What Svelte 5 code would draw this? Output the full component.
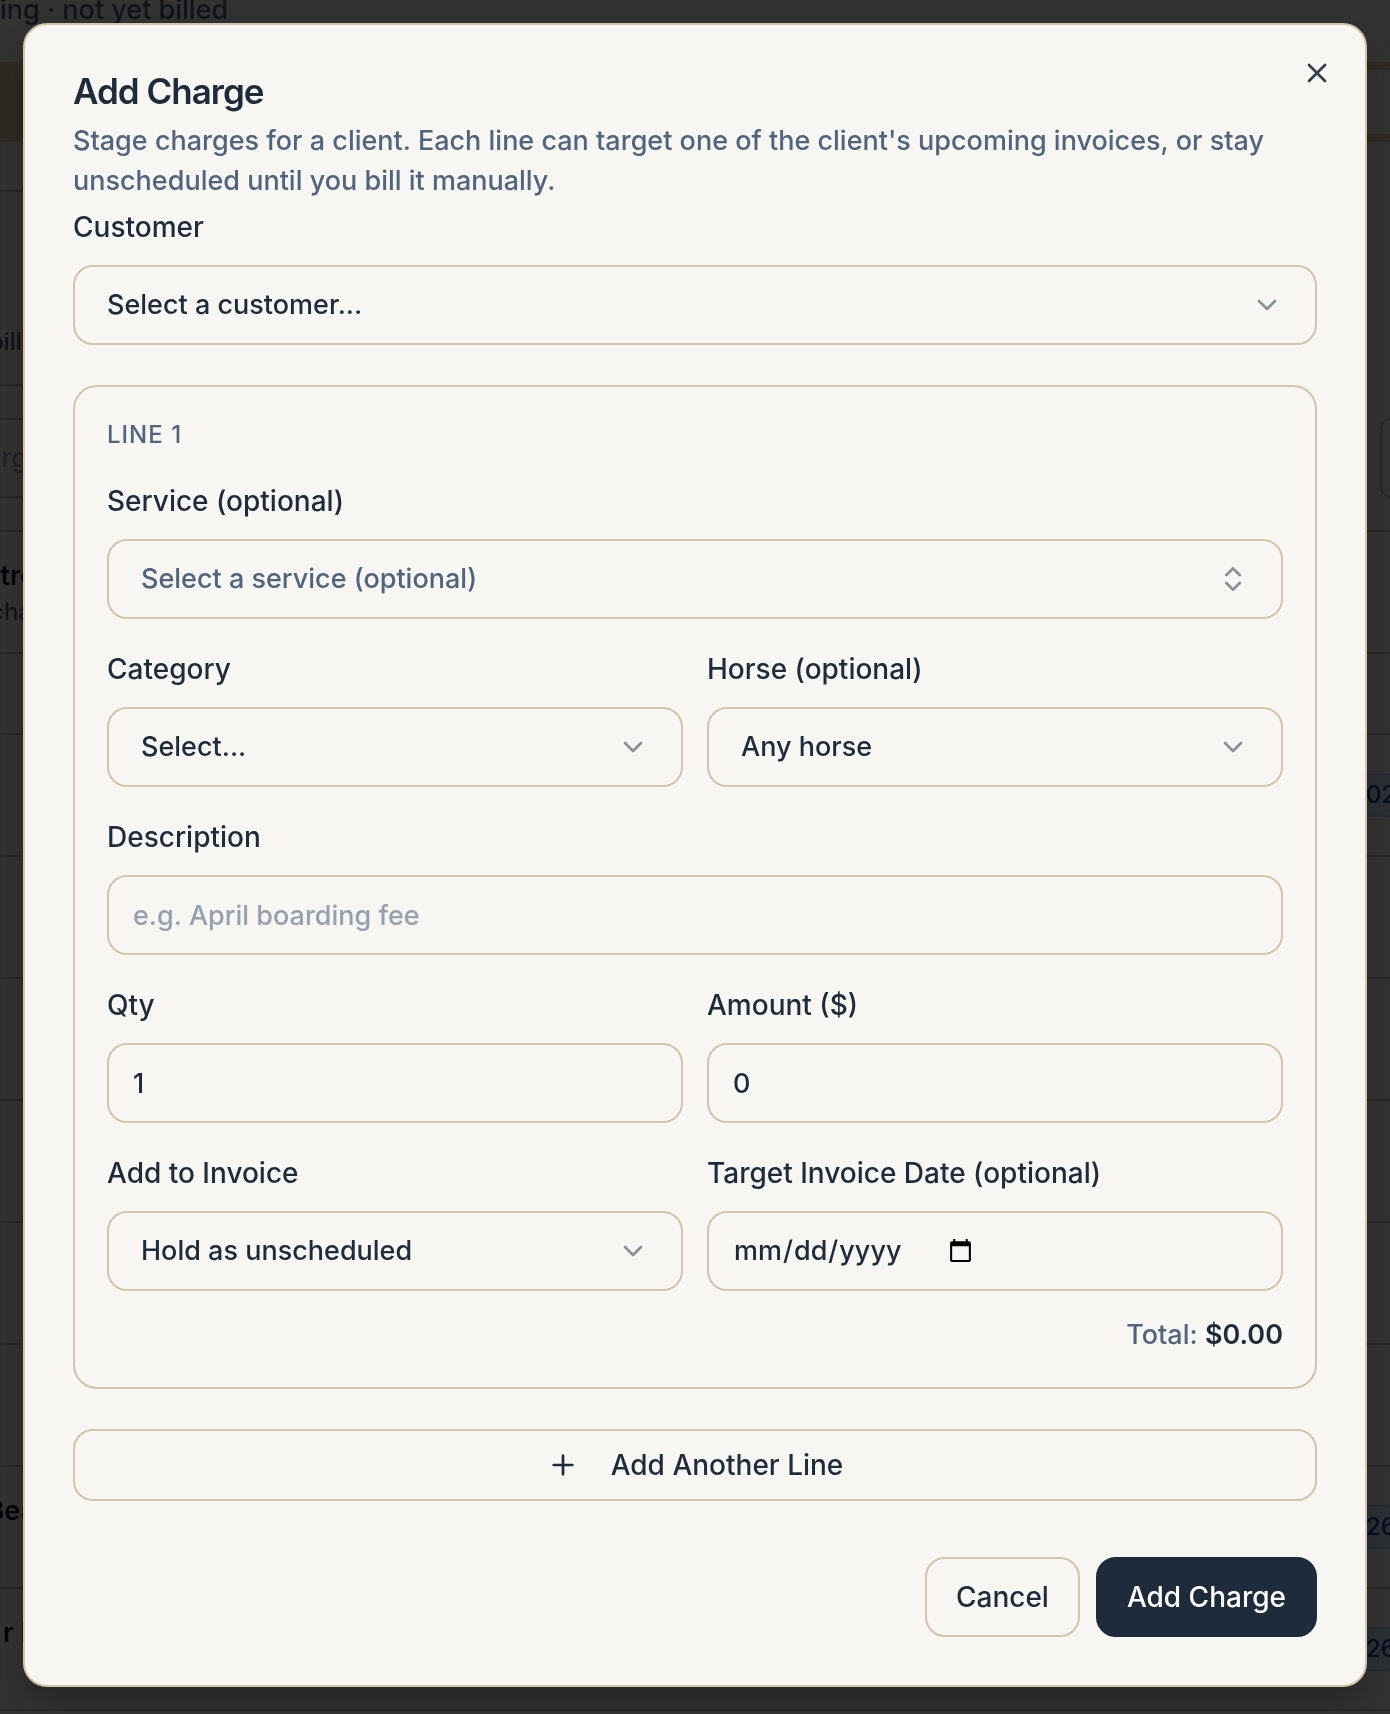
<script lang="ts">
    type Line = {
        service: string;
        category: string;
        horse: string;
        description: string;
        qty: number;
        amount: number;
        invoice: string;
        date: string;
    };

    type ChargeRow = { name?: string; invoice?: string };

    const emptyLine = (): Line => ({
        service: '',
        category: '',
        horse: '',
        description: '',
        qty: 1,
        amount: 0,
        invoice: 'hold',
        date: ''
    });

    // charges listed on the page behind the dialog
    const rows: ChargeRow[] = [
        { invoice: '02' },
        {},
        {},
        {},
        {},
        {},
        { name: 'Bea', invoice: '26' },
        { name: 'r I', invoice: '26' }
    ];

    let isOpen = $state(true);
    let customer = $state('');
    let lines = $state<Line[]>([emptyLine()]);

    function lineTotal(line: Line) {
        return '$' + ((line.qty || 0) * (line.amount || 0)).toFixed(2);
    }

    function addLine() {
        lines.push(emptyLine());
    }

    function close() {
        isOpen = false;
    }

    function handleSubmit(e: SubmitEvent) {
        e.preventDefault();
        close();
    }
</script>

{#snippet chevron()}
    <svg class="icon chevron" viewBox="0 0 24 24" aria-hidden="true"><path d="m6 9 6 6 6-6" /></svg>
{/snippet}

<div class="page" aria-hidden="true">
    <p class="page-intro">ing · not yet billed</p>
    <div class="banner"><span></span></div>
    <div class="stat"><p class="lead small">bille</p></div>
    <div class="filters">
        <div class="search"><p class="lead narrow">charg</p></div>
        <div class="filter-btn"></div>
    </div>
    <div class="charges">
        <div class="row">
            <div>
                <p class="lead bold">tre</p>
                <p class="lead small narrow">cha</p>
            </div>
        </div>
        <div class="row head"></div>
        {#each rows as row}
            <div class="row">
                <p class="lead bold" class:narrow={row.name === 'r I'}>{row.name ?? ''}</p>
                {#if row.invoice}
                    <span class="badge">{row.invoice}</span>
                {/if}
            </div>
        {/each}
    </div>
</div>

{#if isOpen}
    <div class="overlay"></div>
    <div class="dialog" role="dialog" aria-modal="true" aria-labelledby="dialog-title" aria-describedby="dialog-desc">
        <button type="button" class="close-btn" onclick={close} aria-label="Close">
            <svg class="icon" viewBox="0 0 24 24" aria-hidden="true"><path d="M18 6 6 18M6 6l12 12" /></svg>
        </button>

        <header>
            <h2 id="dialog-title">Add Charge</h2>
            <p id="dialog-desc">
                Stage charges for a client. Each line can target one of the client's upcoming invoices, or stay
                unscheduled until you bill it manually.
            </p>
        </header>

        <form onsubmit={handleSubmit}>
            <div class="field">
                <label for="customer">Customer</label>
                <div class="select">
                    <select id="customer" bind:value={customer}>
                        <option value="">Select a customer...</option>
                    </select>
                    {@render chevron()}
                </div>
            </div>

            {#each lines as line, i}
                <section class="line">
                    <h3>Line {i + 1}</h3>

                    <div class="field">
                        <label for="service-{i}">Service (optional)</label>
                        <button type="button" id="service-{i}" class="combobox" aria-haspopup="listbox">
                            <span>{line.service || 'Select a service (optional)'}</span>
                            <svg class="icon chevron" viewBox="0 0 24 24" aria-hidden="true">
                                <path d="m7 15 5 5 5-5M7 9l5-5 5 5" />
                            </svg>
                        </button>
                    </div>

                    <div class="pair">
                        <div class="field">
                            <label for="category-{i}">Category</label>
                            <div class="select">
                                <select id="category-{i}" bind:value={line.category}>
                                    <option value="">Select...</option>
                                </select>
                                {@render chevron()}
                            </div>
                        </div>
                        <div class="field">
                            <label for="horse-{i}">Horse (optional)</label>
                            <div class="select">
                                <select id="horse-{i}" bind:value={line.horse}>
                                    <option value="">Any horse</option>
                                </select>
                                {@render chevron()}
                            </div>
                        </div>
                    </div>

                    <div class="field">
                        <label for="description-{i}">Description</label>
                        <input
                            id="description-{i}"
                            type="text"
                            placeholder="e.g. April boarding fee"
                            bind:value={line.description}
                        />
                    </div>

                    <div class="pair">
                        <div class="field">
                            <label for="qty-{i}">Qty</label>
                            <input id="qty-{i}" type="number" min="1" bind:value={line.qty} />
                        </div>
                        <div class="field">
                            <label for="amount-{i}">Amount ($)</label>
                            <input id="amount-{i}" type="number" min="0" step="0.01" bind:value={line.amount} />
                        </div>
                    </div>

                    <div class="pair">
                        <div class="field">
                            <label for="invoice-{i}">Add to Invoice</label>
                            <div class="select">
                                <select id="invoice-{i}" bind:value={line.invoice}>
                                    <option value="hold">Hold as unscheduled</option>
                                </select>
                                {@render chevron()}
                            </div>
                        </div>
                        <div class="field">
                            <label for="date-{i}">Target Invoice Date (optional)</label>
                            <input id="date-{i}" type="date" bind:value={line.date} />
                        </div>
                    </div>

                    <p class="total">Total: <strong>{lineTotal(line)}</strong></p>
                </section>
            {/each}

            <button type="button" class="btn btn-add" onclick={addLine}>
                <svg class="icon" viewBox="0 0 24 24" aria-hidden="true"><path d="M5 12h14M12 5v14" /></svg>
                Add Another Line
            </button>

            <div class="actions">
                <button type="button" class="btn" onclick={close}>Cancel</button>
                <button type="submit" class="btn btn-primary">Add Charge</button>
            </div>
        </form>
    </div>
{/if}

<style>
    :global(body) {
        background: #fafafa;
        color: #1e2b3a;
        font-family: Inter, "Liberation Sans", sans-serif;
        font-size: 27px;
        font-weight: 450;
        line-height: 40px;
    }

    h2, h3, p {
        margin: 0;
    }

    .page, .page * {
        box-sizing: border-box;
    }

    .page {
        position: fixed;
        inset: 0;
        overflow: hidden;
        color: #50657d;
    }

    .page-intro {
        display: flex;
        align-items: flex-end;
        height: 30px;
    }

    .banner {
        height: 80px;
        margin-top: 32px;
        border: 8px solid #e0d0a8;
        border-width: 8px 0;
    }

    .banner span {
        display: block;
        width: 50%;
        height: 100%;
        background: #e0d0a8;
    }

    .stat {
        display: flex;
        align-items: flex-end;
        height: 196px;
        margin: 48px 48px 32px 0;
        padding-bottom: 26px;
        border: 2px solid #d2c4a8;
        border-left: none;
    }

    .lead {
        display: flex;
        justify-content: flex-end;
        width: 36px;
        white-space: pre;
    }

    .narrow {
        width: 28px;
    }

    .small {
        font-size: 24px;
        line-height: 32px;
    }

    .small.narrow {
        width: 32px;
    }

    .bold {
        color: #0f172a;
        font-weight: 600;
    }

    .filters {
        display: flex;
        gap: 16px;
        height: 80px;
        margin-bottom: 32px;
    }

    .search {
        flex: 1;
        display: flex;
        align-items: center;
        border: 2px solid #d2c4a8;
        border-left: none;
        border-radius: 0 20px 20px 0;
        color: #a8b1bd;
    }

    .filter-btn {
        width: 10px;
        border: 2px solid #d2c4a8;
        border-right: none;
        border-radius: 20px 0 0 20px;
    }

    .charges {
        border-top: 2px solid #d2c4a8;
    }

    .row {
        display: flex;
        justify-content: space-between;
        height: 122px;
        padding: 24px 0;
        border-bottom: 2px solid #d2c4a8;
    }

    .row.head {
        height: 81px;
    }

    .badge {
        align-self: center;
        width: 24px;
        height: 44px;
        border: 2px solid #bfdbfe;
        border-width: 2px 0;
        background: #dbeafe;
        color: #1e40af;
        font-size: 24px;
        font-weight: 500;
    }

    .overlay {
        position: fixed;
        inset: 0;
        background: rgba(0, 0, 0, 0.8);
    }

    .dialog {
        position: relative;
        margin: 23px;
        padding: 48px;
        border: 2px solid #d2c4a8;
        border-radius: 24px;
        background: #f8f6f2;
        box-shadow: 0 20px 30px rgba(0, 0, 0, 0.2);
    }

    .icon {
        flex: none;
        width: 32px;
        height: 32px;
        fill: none;
        stroke: currentColor;
        stroke-width: 2;
        stroke-linecap: round;
        stroke-linejoin: round;
    }

    .chevron {
        opacity: 0.5;
    }

    .close-btn {
        position: absolute;
        top: 32px;
        right: 32px;
        display: flex;
        padding: 0;
        border: none;
        background: none;
        color: inherit;
        opacity: 0.9;
        cursor: pointer;
    }

    header {
        display: flex;
        flex-direction: column;
        gap: 12px;
        margin-bottom: 12px;
        color: #50657d;
    }

    h2 {
        color: #1e2b3a;
        font-size: 35px;
        font-weight: 600;
        line-height: 36px;
        letter-spacing: -1px;
    }

    form {
        display: flex;
        flex-direction: column;
        gap: 40px;
    }

    .field {
        display: flex;
        flex-direction: column;
        gap: 24px;
    }

    label {
        font-size: 28px;
        font-weight: 500;
        line-height: 28px;
    }

    input, select, .combobox {
        box-sizing: border-box;
        width: 100%;
        height: 80px;
        margin: 0;
        padding: 0 24px;
        border: 2px solid #d2c4a8;
        border-radius: 20px;
        background: transparent;
        color: inherit;
        font: inherit;
    }

    input:focus, select:focus, .combobox:focus {
        outline: 2px solid #1e2b3a;
    }

    input::placeholder {
        color: #96a1af;
    }

    input[type='number'] {
        appearance: textfield;
    }

    input::-webkit-datetime-edit {
        flex: none;
    }

    input::-webkit-calendar-picker-indicator {
        margin-left: 4px;
        padding: 4px;
    }

    .select {
        display: grid;
        align-items: center;
    }

    .select select {
        grid-area: 1 / 1;
        padding: 0 80px 0 32px;
        appearance: none;
    }

    .select :global(.icon) {
        grid-area: 1 / 1;
        justify-self: end;
        margin-right: 34px;
        pointer-events: none;
    }

    .combobox {
        display: flex;
        align-items: center;
        justify-content: space-between;
        padding: 0 32px;
        text-align: left;
    }

    .combobox span {
        color: #50657d;
    }

    .line {
        display: flex;
        flex-direction: column;
        gap: 36px;
        padding: 32px;
        border: 2px solid #d2c4a8;
        border-radius: 24px;
    }

    h3 {
        color: #50657d;
        font-size: 24px;
        font-weight: 500;
        line-height: 32px;
        letter-spacing: 1px;
        text-transform: uppercase;
    }

    .pair {
        display: grid;
        grid-template-columns: 1fr 1fr;
        gap: 24px;
    }

    .total {
        margin-top: -12px;
        color: #50657d;
        text-align: right;
    }

    .total strong {
        color: #1e2b3a;
        font-weight: 600;
    }

    .btn {
        display: flex;
        align-items: center;
        justify-content: center;
        height: 80px;
        padding: 0 29px;
        border: 2px solid #d2c4a8;
        border-radius: 20px;
        background: transparent;
        color: inherit;
        font: inherit;
        font-size: 28px;
        font-weight: 500;
        cursor: pointer;
    }

    .btn-add {
        gap: 32px;
        height: 72px;
    }

    .btn-primary {
        border-color: #1e2b3a;
        background: #1e2b3a;
        color: white;
    }

    .actions {
        display: flex;
        justify-content: flex-end;
        gap: 16px;
        margin-top: 16px;
    }
</style>
